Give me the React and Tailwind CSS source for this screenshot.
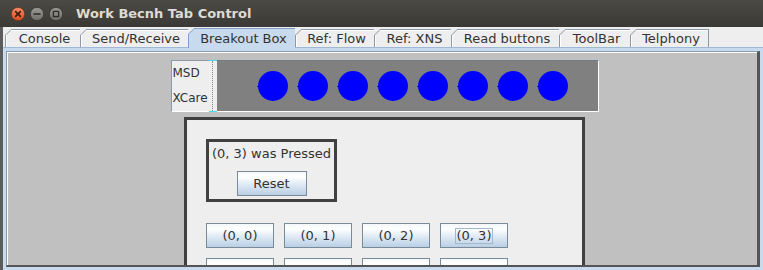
import React from 'react';

const TABS = [
  { label: 'Console', w: 'w-[75px]' },
  { label: 'Send/Receive', w: 'w-[108px]' },
  { label: 'Breakout Box', w: 'w-[107px]', selected: true },
  { label: 'Ref: Flow', w: 'w-[79px]' },
  { label: 'Ref: XNS', w: 'w-[77px]' },
  { label: 'Read buttons', w: 'w-[108px]' },
  { label: 'ToolBar', w: 'w-[71px]' },
  { label: 'Telphony', w: 'w-[79px]', last: true },
];

const GRID = [
  '(0, 0)', '(0, 1)', '(0, 2)', '(0, 3)',
  '(1, 0)', '(1, 1)', '(1, 2)', '(1, 3)',
];

// metal/ocean button gradient
const oceanBtn =
  'border border-[#7a8a99] bg-[linear-gradient(to_bottom,#f4f8fb_0%,#ffffff_22%,#dfe9f4_55%,#b9cfe5_100%)] text-[13px] text-[#333333] flex items-center justify-center';

function WindowButtons() {
  return (
    <div className="flex items-center gap-[5px] pl-[11px]">
      <svg width="14" height="14" viewBox="0 0 14 14">
        <defs>
          <linearGradient id="closeGrad" x1="0" y1="0" x2="0" y2="1">
            <stop offset="0" stopColor="#f88a62" />
            <stop offset="1" stopColor="#dd4c1f" />
          </linearGradient>
        </defs>
        <circle cx="7" cy="7" r="6.6" fill="url(#closeGrad)" stroke="#6a2f18" strokeWidth="0.6" />
        <path d="M4.6 4.6 L9.4 9.4 M9.4 4.6 L4.6 9.4" stroke="#3a1a0c" strokeWidth="1.5" strokeLinecap="round" />
      </svg>
      <svg width="14" height="14" viewBox="0 0 14 14">
        <defs>
          <linearGradient id="grayGrad" x1="0" y1="0" x2="0" y2="1">
            <stop offset="0" stopColor="#9a9993" />
            <stop offset="1" stopColor="#6f6e69" />
          </linearGradient>
        </defs>
        <circle cx="7" cy="7" r="6.6" fill="url(#grayGrad)" stroke="#2f2e2b" strokeWidth="0.6" />
        <path d="M4 7 L10 7" stroke="#2e2d2a" strokeWidth="1.5" strokeLinecap="round" />
      </svg>
      <svg width="14" height="14" viewBox="0 0 14 14">
        <circle cx="7" cy="7" r="6.6" fill="url(#grayGrad)" stroke="#2f2e2b" strokeWidth="0.6" />
        <rect x="4.4" y="4.4" width="5.2" height="5.2" fill="none" stroke="#2e2d2a" strokeWidth="1.3" />
      </svg>
    </div>
  );
}

function Tab({ label, w, selected, last }) {
  const look = selected
    ? 'relative z-10 -mb-px h-[20px] bg-[#c8daee] border-[#7f9dc9]'
    : 'relative h-[18px] bg-[#eeeeee] border-[#8a98a8] shadow-[inset_1px_1px_0_#ffffff]';
  return (
    <div className={`${w} ${look} border-t border-l ${last ? 'border-r' : ''} flex items-center justify-center pl-[3px] text-[13px] text-[#333333] leading-none`}>
      <svg className="absolute -top-px -left-px" width="7" height="7" viewBox="0 0 7 7">
        <polygon points="0,0 6.5,0 0,6.5" fill="#eeeeee" />
        <line x1="0.5" y1="6.2" x2="6.2" y2="0.5" stroke={selected ? '#7f9dc9' : '#8a98a8'} strokeWidth="1" />
      </svg>
      {label}
    </div>
  );
}

function Lamp() {
  return (
    <svg width="31" height="30" viewBox="0 0 31 30">
      <line x1="0" y1="15.5" x2="2" y2="15.5" stroke="#1a1a60" strokeWidth="1" />
      <circle cx="16" cy="15" r="15" fill="#0000ff" />
    </svg>
  );
}

export default function App() {
  return (
    <div className="w-[763px] h-[270px] overflow-hidden flex flex-col bg-[#eeeeee] font-['DejaVu_Sans',sans-serif]">
      {/* Title bar */}
      <div className="h-[27px] shrink-0 flex items-center bg-[linear-gradient(to_bottom,#4b4a45,#3a3935)]">
        <WindowButtons />
        <span className="ml-[13px] text-[13px] font-bold text-[#dfdbd2] leading-none">Work Becnh Tab Control</span>
      </div>

      <div className="flex-1 flex flex-col border-l-[3px] border-[#5c5c5c] min-h-0">
        {/* Tab strip */}
        <div className="h-[20px] shrink-0 flex items-end pl-[2px]">
          {TABS.map((t) => (
            <Tab key={t.label} {...t} />
          ))}
        </div>

        {/* Tab content */}
        <div className="flex-1 min-h-0 flex flex-col border-t border-[#9fb8d8] bg-[#c8daee] px-[3px] pt-[3px] pb-[3px]">
          <div className="flex-1 min-h-0 flex flex-col border-t border-l border-[#8a9aab] border-r-[3px] border-b-2 border-r-[#555555] border-b-[#555555]">
            <div className="flex-1 min-h-0 overflow-hidden bg-[#c0c0c0] border-t border-l border-white flex flex-col items-center pl-[4px]">
              {/* Breakout box */}
              <div className="mt-[7px] flex h-[52px] w-[428px] shrink-0">
                <div className="w-[38px] bg-[#eeeeee] border-t border-l border-b border-[#8a9aab] border-b-white flex flex-col justify-around pl-[1px] text-[12px] leading-[15px] text-[#333333]">
                  <span>MSD</span>
                  <span>XCare</span>
                </div>
                <div className="w-[8px] bg-[#eeeeee] border-t border-b border-[#3fe0e8] flex justify-center">
                  <div className="h-full border-l border-dotted border-[#8a8a8a]"></div>
                </div>
                <div className="flex-1 bg-[#808080] border-t border-[#747c88] border-r border-b border-r-white border-b-white flex items-center pl-[40px] gap-[9px]">
                  {Array.from({ length: 8 }).map((_, i) => (
                    <Lamp key={i} />
                  ))}
                </div>
              </div>

              {/* Button panel */}
              <div className="mt-[5px] w-[401px] h-[300px] shrink-0 border-[3px] border-[#404040] bg-[#eeeeee] pl-[19px] pt-[19px]">
                <div className="w-[131px] h-[63px] border-[3px] border-[#404040] flex flex-col items-center pt-[4px]">
                  <span className="text-[13px] leading-[15px] text-[#333333]">(0, 3) was Pressed</span>
                  <button className={`mt-[10px] w-[70px] h-[25px] ${oceanBtn}`}>Reset</button>
                </div>

                <div className="mt-[21px] grid grid-cols-[repeat(4,68px)] gap-[10px]">
                  {GRID.map((g) => (
                    <button key={g} className={`h-[25px] ${oceanBtn}`}>
                      {g === '(0, 3)' ? (
                        <span className="border border-[#a3b8cc] px-[1px] leading-[14px]">{g}</span>
                      ) : (
                        g
                      )}
                    </button>
                  ))}
                </div>
              </div>
            </div>
          </div>
        </div>
      </div>
    </div>
  );
}
